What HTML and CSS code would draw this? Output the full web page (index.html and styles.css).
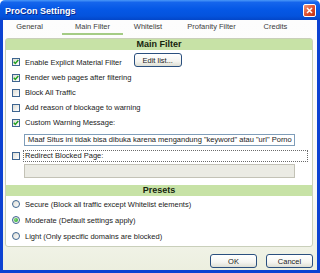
FILE: index.html
```html
<!DOCTYPE html>
<html lang="en">

<head>
  <meta charset="UTF-8">
  <title>ProCon Settings</title>
  <link rel="stylesheet" href="styles.css">
</head>

<body>
  <div class="window">
    <!-- title bar -->
    <div class="titlebar">
      <span class="title">ProCon Settings</span>
      <span class="close">
        <svg width="7" height="7" viewBox="0 0 7 7"><path d="M1 1l5 5M6 1l-5 5" stroke="#fff" stroke-width="1.5" /></svg>
      </span>
    </div>

    <div class="client">
      <!-- tabs -->
      <div class="tabs">
        <span class="tab tab-first">General</span>
        <span class="tab active">Main Filter</span>
        <span class="tab">Whitelist</span>
        <span class="tab">Profanity Filter</span>
        <span class="tab">Credits</span>
      </div>

      <div class="panel">
        <div class="panel-head">Main Filter</div>
        <div class="filter-body">
          <div class="opt opt-first">
            <span class="box"><svg width="6" height="6" viewBox="0 0 6 6"><path d="M0.8 2.8l1.5 1.6 3-3.4" stroke="#21a121" stroke-width="1.5" fill="none" /></svg></span>
            Enable Explicit Material Filter
            <button class="btn btn-edit">Edit list...</button>
          </div>
          <div class="opt">
            <span class="box"><svg width="6" height="6" viewBox="0 0 6 6"><path d="M0.8 2.8l1.5 1.6 3-3.4" stroke="#21a121" stroke-width="1.5" fill="none" /></svg></span>
            Render web pages after filtering
          </div>
          <div class="opt"><span class="box"></span>Block All Traffic</div>
          <div class="opt"><span class="box"></span>Add reason of blockage to warning</div>
          <div class="opt">
            <span class="box"><svg width="6" height="6" viewBox="0 0 6 6"><path d="M0.8 2.8l1.5 1.6 3-3.4" stroke="#21a121" stroke-width="1.5" fill="none" /></svg></span>
            Custom Warning Message:
          </div>
          <div class="field">Maaf Situs ini tidak bisa dibuka karena mengandung "keyword" atau "url" Porno</div>
          <div class="opt opt-focus">
            <span class="box box-tight"></span>
            <span class="focus-label">Redirect Blocked Page:</span>
          </div>
          <div class="field field-off"></div>
        </div>

        <div class="panel-head">Presets</div>
        <div class="presets">
          <div class="opt opt-radio"><span class="radio"></span>Secure (Block all traffic except Whitelist elements)</div>
          <div class="opt opt-radio"><span class="radio on"></span>Moderate (Default settings apply)</div>
          <div class="opt opt-radio"><span class="radio"></span>Light (Only specific domains are blocked)</div>
        </div>
      </div>

      <div class="footer">
        <button class="btn">OK</button>
        <button class="btn">Cancel</button>
      </div>
    </div>
  </div>
</body>

</html>
```

FILE: styles.css
```css
* {
  box-sizing: border-box;
  margin: 0;
  padding: 0;
}

body {
  width: 320px;
  height: 273px;
  overflow: hidden;
  background-color: #ffffff;
  color: #1a1a1a;
  font-family: "Liberation Sans", Arial, sans-serif;
  font-size: 7.5px;
}

.window {
  display: flex;
  flex-direction: column;
  height: 273px;
}

.titlebar {
  display: flex;
  justify-content: space-between;
  align-items: center;
  height: 20px;
  padding: 0 4px 0 5px;
  border-radius: 5px 5px 0 0;
  background: linear-gradient(#4a98f8 0%, #1565ec 12%, #0558e6 45%, #0453dd 80%, #0346c8 100%);
  color: #ffffff;
}

.title {
  align-self: flex-start;
  padding-top: 5px;
  line-height: 13px;
  font-size: 9px;
  font-weight: bold;
  text-shadow: 1px 1px #0b2a8c;
}

.close {
  display: flex;
  justify-content: center;
  align-items: center;
  width: 13px;
  height: 13px;
  border: 1px solid #ffffff;
  border-radius: 2px;
  background: linear-gradient(135deg, #f29a7c, #dd4d2c 55%, #bc3317);
}

.client {
  flex: 1;
  display: flex;
  flex-direction: column;
  padding: 0 4px 2px 2px;
  border: 3px solid #0c42d2;
  border-top: none;
  background: linear-gradient(#fdfdfd, #f9f9f6 70%, #ecefdf);
}

/* tabs */
.tabs {
  display: grid;
  grid-template-columns: 59px 61px 50px 77px 51px;
  margin-left: -2px;
}

.tab {
  line-height: 13px;
  text-align: center;
  color: #3c3c3c;
  border-bottom: 2px solid transparent;
}

.tab-first {
  padding-right: 6px;
}

.tab.active {
  border-bottom-color: #a4cc84;
}

/* panel */
.panel {
  margin-top: 3px;
  border: 1px solid #c9cfba;
  border-radius: 3px;
  background-color: #ffffff;
}

.panel-head {
  height: 11px;
  line-height: 11px;
  text-align: center;
  font-size: 9px;
  font-weight: bold;
  color: #16240e;
  background-color: #c7e2a6;
}

.filter-body {
  padding: 4px 4px 7px 6px;
}

.opt {
  display: flex;
  align-items: center;
  height: 15px;
}

.opt-first {
  height: 16px;
}

.box {
  display: flex;
  justify-content: center;
  align-items: center;
  flex: none;
  width: 8px;
  height: 8px;
  margin-right: 5px;
  border: 1px solid #3e6590;
  background: linear-gradient(135deg, #dcdcd4, #ffffff);
}

.box-tight {
  margin-right: 3px;
}

.btn {
  height: 14px;
  width: 47px;
  border: 1px solid #2a4f7e;
  border-radius: 3px;
  background: linear-gradient(#ffffff, #f5f5f1 60%, #dedfd5);
  font-family: inherit;
  font-size: 7.5px;
  color: #222222;
}

.btn-edit {
  align-self: flex-start;
  width: 48px;
  margin: -1px 0 0 12px;
}

.field {
  width: 271px;
  height: 12px;
  margin: 4px 0 0 12px;
  padding: 0 3px;
  border: 1px solid #7f9db9;
  line-height: 10px;
  white-space: nowrap;
  overflow: hidden;
}

.opt-focus {
  height: 12px;
  margin-top: 4px;
}

.focus-label {
  flex: 1;
  height: 12px;
  padding-left: 1px;
  line-height: 10px;
  border: 1px dotted #6a6a6a;
}

.field-off {
  height: 14px;
  margin-top: 2px;
  border-color: #c3c2b6;
  background-color: #ebebe4;
}

/* presets */
.presets {
  padding: 0 0 2px 6px;
}

.opt-radio {
  height: 16px;
}

.radio {
  display: flex;
  justify-content: center;
  align-items: center;
  flex: none;
  width: 8px;
  height: 8px;
  margin-right: 5px;
  border: 1px solid #3e6590;
  border-radius: 50%;
  background: linear-gradient(135deg, #dcdcd4, #ffffff);
}

.radio.on::after {
  content: "";
  width: 4px;
  height: 4px;
  border-radius: 50%;
  background: radial-gradient(circle at 35% 35%, #7ee07e, #1d9a1d);
}

.footer {
  display: flex;
  justify-content: flex-end;
  gap: 9px;
  margin-top: 7px;
}
```
